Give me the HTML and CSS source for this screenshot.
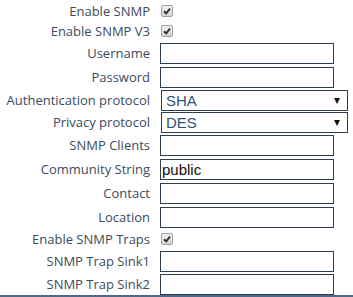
FILE: index.html
```html
<!DOCTYPE html>
<html lang="en">
<head>
    <meta charset="UTF-8">
    <title>SNMP Settings</title>
    <link rel="stylesheet" href="styles.css">
</head>
<body>

<form class="snmp-form">
    <div class="row check-row">
        <label class="lbl">Enable SNMP</label>
        <span class="check"><svg viewBox="0 0 12 12"><path d="M2.5 6.3 L5 8.8 L9.6 3.2" /></svg></span>
    </div>
    <div class="row check-row">
        <label class="lbl">Enable SNMP V3</label>
        <span class="check"><svg viewBox="0 0 12 12"><path d="M2.5 6.3 L5 8.8 L9.6 3.2" /></svg></span>
    </div>
    <div class="row">
        <label class="lbl" for="username">Username</label>
        <input type="text" id="username" class="field">
    </div>
    <div class="row">
        <label class="lbl" for="password">Password</label>
        <input type="password" id="password" class="field">
    </div>
    <div class="row sel-row">
        <label class="lbl" for="auth">Authentication protocol</label>
        <span class="select-wrap">
            <select id="auth" class="select">
                <option>SHA</option>
                <option>MD5</option>
            </select>
        </span>
    </div>
    <div class="row sel-row">
        <label class="lbl" for="priv">Privacy protocol</label>
        <span class="select-wrap">
            <select id="priv" class="select">
                <option>DES</option>
                <option>AES</option>
            </select>
        </span>
    </div>
    <div class="row">
        <label class="lbl" for="clients">SNMP Clients</label>
        <input type="text" id="clients" class="field">
    </div>
    <div class="row">
        <label class="lbl" for="community">Community String</label>
        <input type="text" id="community" class="field" value="public">
    </div>
    <div class="row">
        <label class="lbl" for="contact">Contact</label>
        <input type="text" id="contact" class="field">
    </div>
    <div class="row">
        <label class="lbl" for="location">Location</label>
        <input type="text" id="location" class="field">
    </div>
    <div class="row check-row">
        <label class="lbl">Enable SNMP Traps</label>
        <span class="check"><svg viewBox="0 0 12 12"><path d="M2.5 6.3 L5 8.8 L9.6 3.2" /></svg></span>
    </div>
    <div class="row">
        <label class="lbl" for="sink1">SNMP Trap Sink1</label>
        <input type="text" id="sink1" class="field">
    </div>
    <div class="row last-row">
        <label class="lbl" for="sink2">SNMP Trap Sink2</label>
        <input type="text" id="sink2" class="field">
    </div>
</form>

</body>
</html>
```

FILE: styles.css
```css
html, body {
    margin: 0;
    padding: 0;
    overflow: hidden;
    background-color: #fff;
}

.snmp-form {
    padding-top: 1px;
    border-bottom: 2px solid #4c6a88;
}

.row {
    display: flex;
    align-items: center;
    height: 24px;
}

.check-row {
    height: 20px;
}

.sel-row {
    height: 22px;
}

.last-row {
    height: 22px;
}

.lbl {
    width: 150px;
    margin-right: 10px;
    margin-top: -1px;
    text-align: right;
    font-family: "Open Sans", sans-serif;
    font-size: 13px;
    color: #3b4b5e;
    white-space: nowrap;
}

.field {
    width: 174px;
    height: 21px;
    box-sizing: border-box;
    border: 1px solid #2c3e50;
    border-radius: 0;
    padding: 0 1px;
    font-family: "Liberation Sans", Arial, sans-serif;
    font-size: 15px;
    color: #1a0a0a;
    outline: none;
}

.select-wrap {
    position: relative;
    margin-left: 1px;
}

.select {
    appearance: none;
    width: 187px;
    height: 21px;
    box-sizing: border-box;
    border: 1px solid #2c3e50;
    border-radius: 0;
    background-color: #fff;
    padding: 0 4px;
    font-family: "Liberation Sans", Arial, sans-serif;
    font-size: 15px;
    color: #34507c;
}

.select-wrap::after {
    content: "";
    position: absolute;
    right: 8px;
    top: 8px;
    border-left: 3.5px solid transparent;
    border-right: 3.5px solid transparent;
    border-top: 6px solid #111;
}

.check {
    width: 12px;
    height: 12px;
    box-sizing: border-box;
    margin-left: 1px;
    border: 1px solid #a0a0a0;
    border-radius: 2px;
    background: linear-gradient(#f2f2f2, #d2d2d2);
    display: flex;
}

.check svg {
    width: 10px;
    height: 10px;
    fill: none;
    stroke: #2b2b2b;
    stroke-width: 2.2;
}
```
